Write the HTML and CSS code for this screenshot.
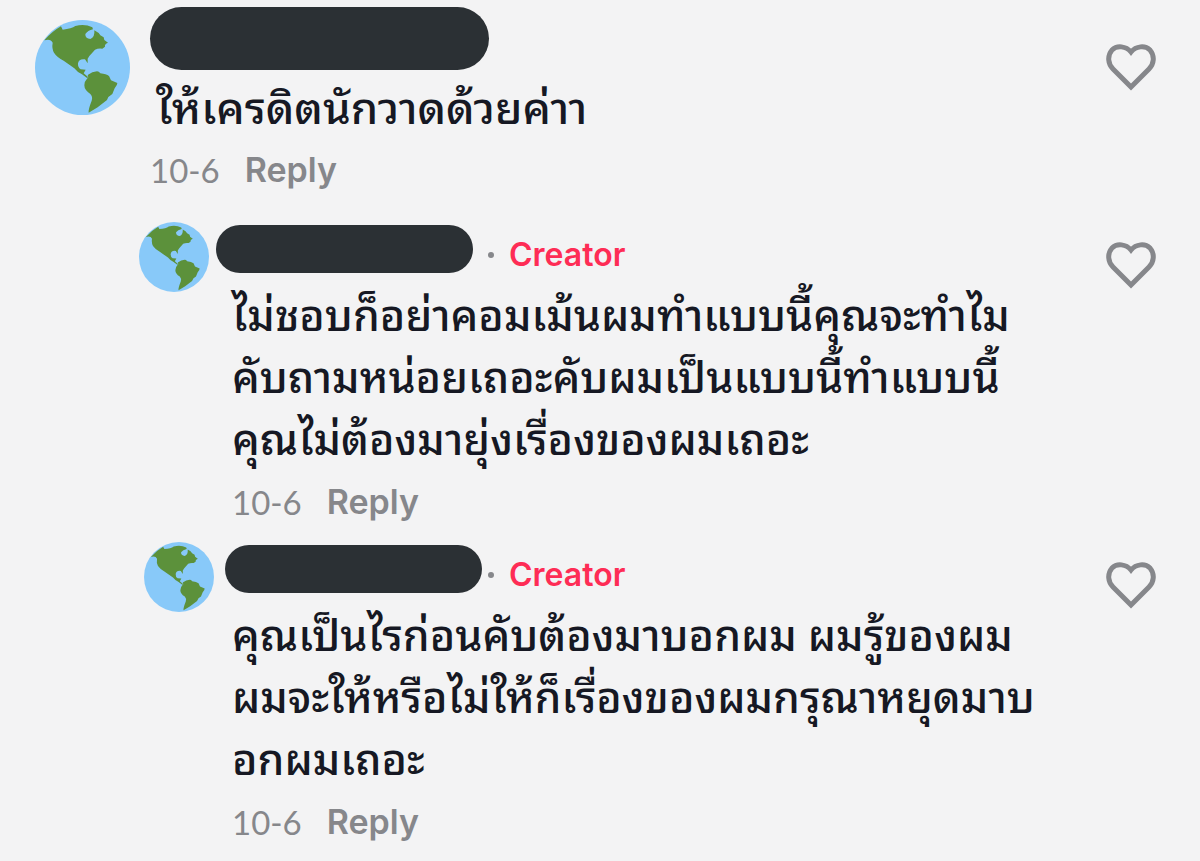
FILE: index.html
```
<!DOCTYPE html>
<html lang="th">
  <head>
    <meta charset="UTF-8" />
    <meta name="viewport" content="width=device-width, initial-scale=1.0" />
    <title>Comments</title>
    <link rel="stylesheet" href="styles.css" />
  </head>
  <body>
    <!-- shared shapes -->
    <svg class="sprites" aria-hidden="true">
      <symbol id="globe" viewBox="0 0 285 285">
        <circle cx="142.500" cy="142.500" r="142.500" fill="#88c9f9" />
        <path
          fill="#5c913b"
          d="M28 61Q50 35 78 19L83 29Q110 26 121 18Q150 11 172 22L174 28Q158 32 151 42Q150 55 166 57Q180 52 178 31Q192 38 196 46L206 52L208 60L219 68Q208 72 210 80L202 86Q190 84 180 89Q172 98 163 108L158 116V130L150 118Q132 115 129 130Q128 142 137 148L152 149L146 160L160 172L156 174L141 163Q128 158 118 145L86 122Q66 112 57 98Q50 85 53 68Q47 55 28 61Z"
        />
        <path
          fill="#5c913b"
          d="M160 172L158 165Q172 154 186 154Q192 154 196 160Q214 162 222 168L228 181L247 189Q247 196 239 205L232 222Q220 228 216 240L188 262L161 278Q159 270 170 242Q174 230 166 222Q148 210 148 196Q148 184 156 176Z"
        />
      </symbol>
      <symbol id="heart" viewBox="0 0 52 48">
        <path
          fill="none"
          stroke="#86878b"
          stroke-width="5"
          d="M26 8C21 2 12 1 7 6C2 12 3 20 8 25L26 43L44 25C49 20 50 12 45 6C40 1 31 2 26 8Z"
        />
      </symbol>
    </svg>

    <main class="comments">
      <article class="comment">
        <svg class="avatar"><use href="#globe" /></svg>
        <div class="comment-body">
          <div class="name"></div>
          <p class="text">ให้เครดิตนักวาดด้วยค่าา</p>
          <div class="meta">
            <time>10-6</time>
            <button class="reply-btn">Reply</button>
          </div>
        </div>
        <button class="like" aria-label="Like">
          <svg><use href="#heart" /></svg>
        </button>
      </article>

      <article class="comment reply">
        <div class="comment-body">
          <header class="head">
            <svg class="avatar"><use href="#globe" /></svg>
            <div class="name"></div>
            <span class="dot"></span>
            <span class="creator">Creator</span>
          </header>
          <p class="text">
            ไม่ชอบก็อย่าคอมเม้นผมทำแบบนี้คุณจะทำไม<br />
            คับถามหน่อยเถอะคับผมเป็นแบบนี้ทำแบบนี้<br />
            คุณไม่ต้องมายุ่งเรื่องของผมเถอะ
          </p>
          <div class="meta">
            <time>10-6</time>
            <button class="reply-btn">Reply</button>
          </div>
        </div>
        <button class="like" aria-label="Like">
          <svg><use href="#heart" /></svg>
        </button>
      </article>

      <article class="comment reply shifted">
        <div class="comment-body">
          <header class="head">
            <svg class="avatar"><use href="#globe" /></svg>
            <div class="name"></div>
            <span class="dot"></span>
            <span class="creator">Creator</span>
          </header>
          <p class="text">
            คุณเป็นไรก่อนคับต้องมาบอกผม ผมรู้ของผม<br />
            ผมจะให้หรือไม่ให้ก็เรื่องของผมกรุณาหยุดมาบ<br />
            อกผมเถอะ
          </p>
          <div class="meta">
            <time>10-6</time>
            <button class="reply-btn">Reply</button>
          </div>
        </div>
        <button class="like" aria-label="Like">
          <svg><use href="#heart" /></svg>
        </button>
      </article>
    </main>
  </body>
</html>
```
FILE: styles.css
```
* {
  box-sizing: border-box;
}

body {
  margin: 0;
  background-color: #f3f3f4;
  color: #161823;
  font-family: Lato, "Noto Sans Thai Looped", Loma, Waree, Garuda,
    "Noto Sans Thai", sans-serif;
}

.sprites {
  position: absolute;
  width: 0;
  height: 0;
}

.comments {
  padding: 7px 43px 0 35px;
}

.comment {
  display: flex;
  align-items: flex-start;
  gap: 20px;
}

.comment-body {
  flex: 1;
}

.avatar {
  flex: none;
  width: 95px;
  height: 95px;
  margin-top: 13px;
}

.name {
  width: 339px;
  height: 63px;
  margin-bottom: 6px;
  border-radius: 32px;
  background-color: #2b3034;
}

.text {
  margin: 0;
  padding-left: 6px;
  font-size: 44px;
  font-weight: 500;
  line-height: 62px;
  white-space: nowrap;
}

.meta {
  display: flex;
  gap: 25px;
  color: #86878b;
  font-size: 33px;
  line-height: 64px;
}

button {
  padding: 0;
  border: none;
  background: none;
  cursor: pointer;
}

.reply-btn {
  color: #86878b;
  font-family: Inter, sans-serif;
  font-size: 34px;
  font-weight: 600;
  line-height: 64px;
}

.like {
  height: 48px;
  margin-top: 37px;
}

.like svg {
  display: block;
  width: 52px;
  height: 48px;
}

/* Replies */
.reply {
  margin-top: 20px;
  padding-left: 104px;
}

.reply + .reply {
  margin-top: 8px;
}

.head {
  display: flex;
  height: 62px;
}

.head .avatar {
  width: 70px;
  height: 70px;
  margin: 0 7px 0 0;
}

.head .name {
  width: 257px;
  height: 48px;
  margin: 3px 15px 0 0;
}

.dot {
  width: 6px;
  height: 6px;
  margin: 30px 15px 0 0;
  border-radius: 50%;
  background-color: #86878b;
}

.creator {
  color: #fe2c55;
  font-family: Inter, sans-serif;
  font-size: 32px;
  font-weight: 600;
  line-height: 66px;
}

.reply .text,
.reply .meta {
  margin-left: 93px;
}

.reply .text {
  padding-left: 0;
  font-size: 43px;
}

.reply .like {
  margin-top: 20px;
}

.shifted .head .avatar {
  margin: 0 11px 0 5px;
}

.shifted .head .name {
  margin-right: 6px;
}
```
